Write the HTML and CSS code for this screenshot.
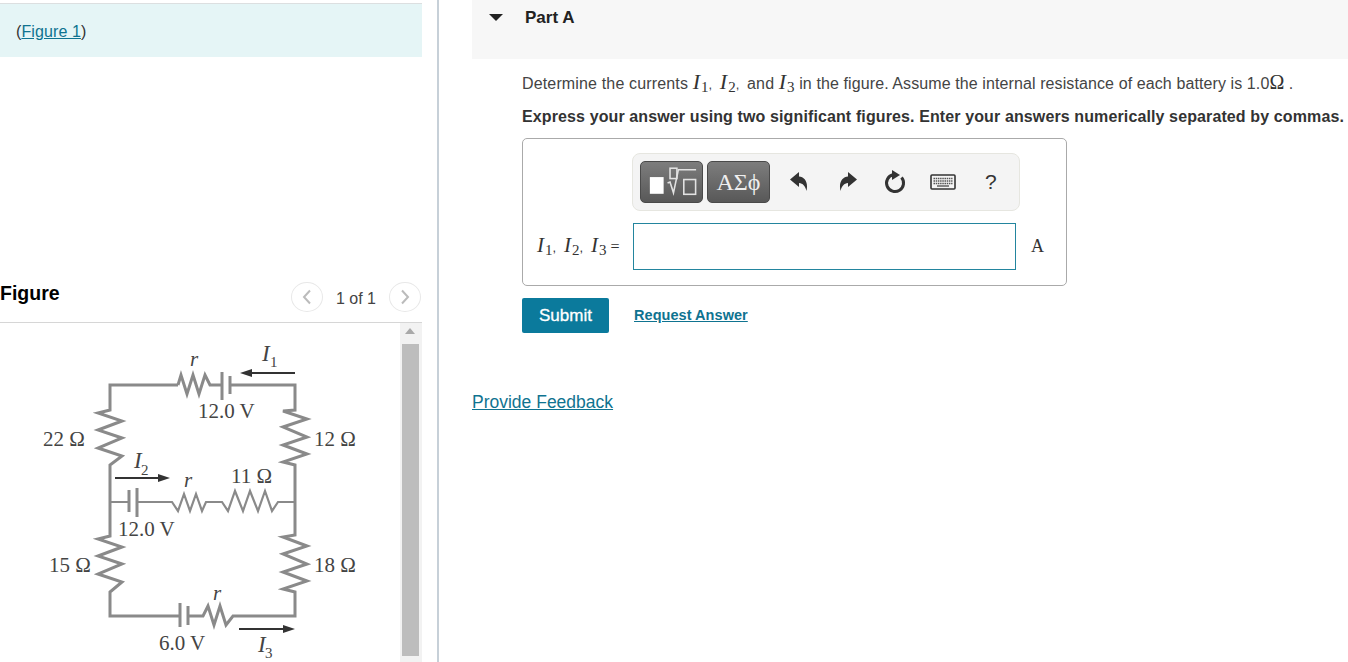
FILE: index.html
```html
<!DOCTYPE html>
<html lang="en">
<head>
<meta charset="utf-8">
<title>Part A</title>
<link rel="stylesheet" href="styles.css">
</head>
<body>
<div class="page">
  <aside class="left">
    <div class="banner">(<a href="#" class="link">Figure 1</a>)</div>
    <div class="fig-head">
      <h2 class="fig-title">Figure</h2>
      <div class="pager">
        <span class="circle"><svg width="12" height="16" viewBox="0 0 12 16"><path d="M9 1.5 L3 8 L9 14.5" class="chev"/></svg></span>
        <span class="count">1 of 1</span>
        <span class="circle"><svg width="12" height="16" viewBox="0 0 12 16"><path d="M3 1.5 L9 8 L3 14.5" class="chev"/></svg></span>
      </div>
    </div>
    <div class="fig-body">
      <svg class="circuit" width="400" height="339" viewBox="0 323 400 339">
        <g class="wire">
          <path d="M178 385H110V410L98 413L122 421L98 430L122 438L98 448L122 456L110 465V536L98 539L122 547L98 556L122 564L98 574L122 582L110 592V616H180"/>
          <path d="M189 616H203L208 606L214 625L220 606L226 625L233 616H295V592L283 589L307 581L283 572L307 564L283 554L307 546L283 537L295 535V465L283 462L307 454L283 445L307 437L283 427L307 419L283 411L295 410V385H231"/>
          <path d="M222 385H210L205 375L199 394L193 375L187 394L181 375L178 385" />
        </g>
        <g class="wire thin">
          <path d="M110 502H129M137 502H172L178 511L184 494L190 511L196 494L202 511L206 502H222L228 511L235 491L243 511L250 491L258 511L265 491L272 511L278 502H295"/>
        </g>
        <g class="plate">
          <path d="M222 372V400M230 376V394M129 490V512M137 488V517M180 603V627M188 606V625"/>
        </g>
        <g class="arrow">
          <path d="M295 373H248M115 478H162M239 629H287"/>
          <path class="head" d="M240 373L252 369V377ZM170 478L158 474V482ZM295 629L283 625V633Z"/>
        </g>
        <text x="43" y="446" class="lbl">22 Ω</text>
        <text x="198" y="418" class="lbl">12.0 V</text>
        <text x="314" y="446" class="lbl">12 Ω</text>
        <text x="231" y="483" class="lbl">11 Ω</text>
        <text x="118" y="536" class="lbl">12.0 V</text>
        <text x="49" y="572" class="lbl">15 Ω</text>
        <text x="314" y="572" class="lbl">18 Ω</text>
        <text x="159" y="650" class="lbl">6.0 V</text>
        <text x="190" y="366" class="lbl it">r</text>
        <text x="184" y="487" class="lbl it">r</text>
        <text x="213" y="600" class="lbl it">r</text>
        <text x="262" y="361" class="lbl it big">I</text><text x="270" y="367" class="lbl sb">1</text>
        <text x="134" y="468" class="lbl it big">I</text><text x="141" y="475" class="lbl sb">2</text>
        <text x="258" y="652" class="lbl it big">I</text><text x="265" y="658" class="lbl sb">3</text>
      </svg>
      <div class="scroll">
        <span class="scroll-up"></span>
        <span class="scroll-thumb"></span>
      </div>
    </div>
  </aside>
  <main class="right">
    <div class="part-bar">
      <span class="tri"></span>
      <h1 class="part-title">Part A</h1>
    </div>
    <div class="part-body">
      <p class="q">Determine the currents <span class="m"><i>I</i><sub>1</sub></span><span class="mc">,</span> <span class="m"><i>I</i><sub>2</sub></span><span class="mc">,</span> and <span class="m"><i>I</i><sub>3</sub></span> <span class="loose">in the figure. Assume the internal resistance of each battery is 1.0</span><span class="m om">Ω</span> .</p>
      <p class="q strong">Express your answer using two significant figures. Enter your answers numerically separated by commas.</p>
      <div class="answer">
        <div class="toolbar">
          <span class="tbtn t1">
            <svg width="62" height="42" viewBox="0 0 62 42">
              <rect x="9" y="16" width="14" height="17" fill="#fff"/>
              <rect x="29.5" y="7" width="7" height="10.5" class="ol"/>
              <path d="M27 22L29.5 21L33 32L38 8.5H56" class="ol"/>
              <rect x="43.5" y="18.5" width="12" height="15" class="ol"/>
            </svg>
          </span>
          <span class="tbtn t2">ΑΣϕ</span>
          <span class="ico i1"><svg width="18" height="20" viewBox="0 0 18 20"><path d="M0 7.5L9 0V4.5C14.5 5 18.5 10 16.5 19C15 13.5 13 11.5 9 11V15Z"/></svg></span>
          <span class="ico i2"><svg width="18" height="20" viewBox="0 0 18 20"><path d="M18 7.5L9 0V4.5C3.5 5 -0.5 10 1.5 19C3 13.5 5 11.5 9 11V15Z"/></svg></span>
          <span class="ico i3"><svg width="22" height="24" viewBox="0 0 22 24"><path d="M17.5 7.5A8.5 8.5 0 1 1 9 4.8" class="ring"/><path d="M8 0L16 5L8 10Z"/></svg></span>
          <span class="ico i4"><svg width="26" height="16" viewBox="0 0 26 16"><rect x="1" y="1" width="24" height="14" rx="1" class="kb"/><path d="M3.5 4.5H22.5M3.5 7H22.5M3.5 9.5H22.5" class="keys"/><path d="M7 12H19" class="bar"/></svg></span>
          <span class="ico help">?</span>
        </div>
        <div class="input-row">
          <label class="lab"><span class="m"><i>I</i><sub>1</sub></span><span class="mc">,</span> <span class="m"><i>I</i><sub>2</sub></span><span class="mc">,</span> <span class="m"><i>I</i><sub>3</sub></span> <span class="eq">=</span></label>
          <input class="field" type="text">
          <span class="unit">A</span>
        </div>
      </div>
      <div class="actions">
        <button class="submit" type="button">Submit</button>
        <a href="#" class="link req">Request Answer</a>
      </div>
    </div>
    <a href="#" class="link feedback">Provide Feedback</a>
  </main>
</div>
</body>
</html>
```
FILE: styles.css
```css
* { box-sizing: border-box; }
html, body { margin: 0; padding: 0; height: 662px; overflow: hidden; background: #fff; }
body { font-family: "Liberation Sans", Arial, sans-serif; font-size: 16px; color: #333; }
.page { display: flex; height: 662px; }
.link { color: #0f7390; text-decoration: underline; }

.left { width: 439px; flex: none; border-right: 2px solid #c7d0d8; padding-top: 3px; }
.banner { width: 422px; height: 54px; border-top: 1px solid #dcdfe0; background: #e5f5f6; padding: 19px 0 0 16px; line-height: 18px; letter-spacing: .1px; }
.fig-head { width: 422px; height: 44px; margin-top: 222px; border-bottom: 1px solid #d6d6d6; display: flex; justify-content: space-between; align-items: flex-start; padding-top: 3px; }
.fig-title { margin: 0; font-size: 19.5px; line-height: 22px; color: #000; font-weight: 700; }
.pager { display: flex; align-items: center; padding-right: 1px; }
.circle { width: 32px; height: 30px; border: 1px solid #e8e8e8; border-radius: 50%; display: flex; align-items: center; justify-content: center; }
.chev { fill: none; stroke: #bbb; stroke-width: 2; }
.count { margin: 3px 13px 0 13px; color: #444; }
.fig-body { display: flex; width: 422px; }
.circuit { display: block; flex: none; }
.wire path { fill: none; stroke: #8a8a8a; stroke-width: 3; }
.wire.thin path { stroke-width: 2.2; }
.plate path { fill: none; stroke: #8a8a8a; stroke-width: 3; }
.arrow path { fill: none; stroke: #333; stroke-width: 2; }
.arrow .head { fill: #333; stroke: none; }
.lbl { font-family: "Liberation Serif", "Times New Roman", serif; font-size: 21px; fill: #444; }
.it { font-style: italic; }
.big { font-size: 23px; }
.sb { font-size: 15px; }
.scroll { width: 22px; height: 339px; background: #f2f2f2; display: flex; flex-direction: column; align-items: flex-start; padding: 5px 0 0 2px; }
.scroll-up { width: 0; height: 0; margin: 0 0 10px 3px; border: 5px solid transparent; border-top: 0; border-bottom: 6px solid #a9a9a9; }
.scroll-thumb { width: 17px; height: 312px; background: #bdbdbd; }

.right { flex: 1; min-width: 0; padding-left: 33px; white-space: nowrap; }
.part-bar { height: 59px; background: #f7f7f7; display: flex; align-items: flex-start; }
.tri { width: 0; height: 0; margin: 14px 0 0 17px; border-style: solid; border-width: 7px 7px 0 7px; border-color: #222 transparent transparent transparent; }
.part-title { margin: 8px 0 0 22px; font-size: 17px; line-height: 19px; color: #222; font-weight: 700; }
.part-body { padding-left: 50px; }
.q { margin: 0; height: 34px; line-height: 19px; color: #444; letter-spacing: .15px; }
.part-body .q:first-child { margin-top: 15px; height: 33px; }
.loose { letter-spacing: .1px; }
.q.strong { font-weight: 700; color: #333; height: 31px; letter-spacing: .117px; }
.m { font-family: "Liberation Serif", "Times New Roman", serif; font-size: 22px; line-height: 0; color: #333; letter-spacing: 0; }
.m i { margin-right: 1px; }
.m sub { font-size: 15px; line-height: 0; vertical-align: -3px; }
.mc { font-size: 13px; margin-right: 3px; }
.om { font-size: 20px; }

.answer { width: 545px; height: 148px; border: 1px solid #aaa; border-radius: 5px; padding: 14px 0 0 109px; }
.toolbar { width: 388px; height: 58px; background: #f4f4f4; border: 1px solid #e6e6e0; border-radius: 8px; display: flex; align-items: center; padding-left: 7px; }
.tbtn { height: 42px; border: 1px solid #4a4a4a; border-radius: 5px; background: linear-gradient(#7d7d7d, #585858); display: flex; align-items: center; justify-content: center; color: #eee; }
.t1 { width: 63px; }
.t2 { width: 63px; margin-left: 4px; font-family: "Liberation Serif", serif; font-size: 24px; }
.ol { fill: none; stroke: #e2e2e2; stroke-width: 1.6; }
.ico { display: flex; align-items: center; justify-content: center; flex: none; }
.ico svg { display: block; }
.ico path { fill: #333; }
.i1 { margin-left: 20px; }
.i2 { margin-left: 31px; }
.i3 { margin-left: 27px; }
.i4 { margin-left: 24px; }
.ico .ring { fill: none; stroke: #333; stroke-width: 3; }
.kb { fill: #f4f4f4; stroke: #333; stroke-width: 1.6; }
.ico .keys { fill: none; stroke: #555; stroke-width: 1.4; stroke-dasharray: 1.5 .7; }
.ico .bar { fill: none; stroke: #555; stroke-width: 1.4; }
.help { margin-left: 29px; font-size: 21px; color: #333; }
.input-row { display: flex; align-items: center; margin: 12px 0 0 -95px; }
.lab { width: 95px; font-size: 14px; color: #333; white-space: nowrap; }
.lab .m { font-size: 21px; }
.lab .mc { margin-right: 4px; }
.eq { font-family: "Liberation Serif", serif; font-size: 16px; }
.field { width: 383px; height: 47px; border: 1px solid #23859e; background: #fff; padding: 0; margin: 0 0 0 1px; outline: none; }
.unit { margin-left: 15px; font-family: "Liberation Serif", serif; font-size: 18px; color: #333; }

.actions { display: flex; align-items: center; margin-top: 12px; }
.submit { width: 87px; height: 35px; border: 0; border-radius: 2px; background: #0b7a9c; color: #fff; font: 400 17px "Liberation Sans", Arial, sans-serif; padding: 0; -webkit-text-stroke: .3px #fff; }
.req { margin: 0 0 2px 25px; font-size: 14.5px; font-weight: 700; letter-spacing: .05px; }
.feedback { display: inline-block; margin-top: 59px; font-size: 17.5px; line-height: 21px; }
```
